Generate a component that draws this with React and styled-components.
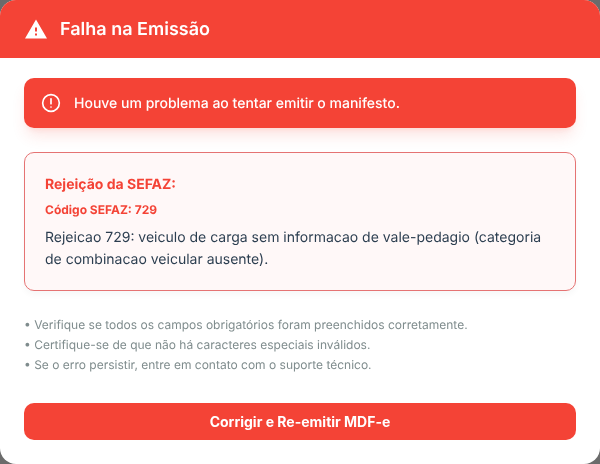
import React from "react";
import styled, { createGlobalStyle } from "styled-components";

const GlobalStyle = createGlobalStyle`
  html, body {
    margin: 0;
    padding: 0;
    background: #6b6b6b;
  }
  * {
    box-sizing: border-box;
  }
`;

const hints = [
  "Verifique se todos os campos obrigatórios foram preenchidos corretamente.",
  "Certifique-se de que não há caracteres especiais inválidos.",
  "Se o erro persistir, entre em contato com o suporte técnico.",
];

const App = () => {
  return (
    <>
      <GlobalStyle />
      <Modal>
        <Header>
          <svg width="24" height="24" viewBox="0 0 24 24" fill="#fff">
            <path d="M1 21.5h22L12 2.5 1 21.5zm12-3h-2v-2h2v2zm0-4h-2v-4h2v4z" />
          </svg>
          <Title>Falha na Emissão</Title>
        </Header>
        <Body>
          <AlertBar>
            <svg
              width="20"
              height="20"
              viewBox="0 0 24 24"
              fill="none"
              stroke="#fff"
              strokeWidth="2"
              strokeLinecap="round"
            >
              <circle cx="12" cy="12" r="10" />
              <path d="M12 7v6" />
              <path d="M12 16.8v.1" />
            </svg>
            <AlertText>Houve um problema ao tentar emitir o manifesto.</AlertText>
          </AlertBar>
          <RejectCard>
            <RejectTitle>Rejeição da SEFAZ:</RejectTitle>
            <RejectCode>Código SEFAZ: 729</RejectCode>
            <RejectText>
              Rejeicao 729: veiculo de carga sem informacao de vale-pedagio (categoria
              de combinacao veicular ausente).
            </RejectText>
          </RejectCard>
          <HintList>
            {hints.map((hint) => (
              <li key={hint}>• {hint}</li>
            ))}
          </HintList>
          <SubmitButton>Corrigir e Re-emitir MDF-e</SubmitButton>
        </Body>
      </Modal>
    </>
  );
};
export default App;

const Modal = styled.div`
  width: 600px;
  height: 464px;
  background: #fff;
  border-radius: 16px;
  overflow: hidden;
  font-family: Inter, "Liberation Sans", sans-serif;
  text-rendering: geometricPrecision;
  will-change: transform;
  display: flex;
  flex-direction: column;
`;

const Header = styled.header`
  height: 58px;
  background: #f44336;
  display: flex;
  align-items: center;
  gap: 12px;
  padding: 0 24px;
  flex-shrink: 0;
`;

const Title = styled.h2`
  margin: 0;
  color: #fff;
  font-size: 18px;
  font-weight: 600;
`;

const Body = styled.div`
  padding: 20px 24px 0;
  display: flex;
  flex-direction: column;
`;

const AlertBar = styled.div`
  height: 50px;
  background: #f44336;
  border-radius: 10px;
  display: flex;
  align-items: center;
  gap: 13px;
  padding: 0 17px;
  box-shadow: 0 10px 15px -3px rgba(244, 67, 54, 0.15), 0 4px 6px -4px rgba(244, 67, 54, 0.15);
`;

const AlertText = styled.span`
  color: #fff;
  font-size: 14px;
  font-weight: 500;
`;

const RejectCard = styled.div`
  margin-top: 24px;
  height: 139px;
  background: #fff8f8;
  border: 1px solid #e57373;
  border-radius: 10px;
  padding: 20px;
  box-shadow: 0 4px 6px rgba(0, 0, 0, 0.03);
`;

const RejectTitle = styled.h3`
  margin: 3px 0 0;
  color: #f44336;
  font-size: 14px;
  font-weight: 700;
  line-height: 17px;
`;

const RejectCode = styled.div`
  margin-top: 9px;
  color: #f44336;
  font-size: 12px;
  font-weight: 700;
  line-height: 16px;
`;

const RejectText = styled.p`
  margin: 9px 0 0;
  color: #2c3e50;
  font-size: 14px;
  line-height: 22.4px;
`;

const HintList = styled.ul`
  list-style: none;
  margin: 24px 0 0;
  padding: 0;
  color: #7f8c8d;
  font-size: 12px;
  line-height: 20px;
`;

const SubmitButton = styled.button`
  margin-top: 28px;
  height: 37px;
  width: 100%;
  border: none;
  border-radius: 10px;
  background: #f44336;
  color: #fff;
  font-family: inherit;
  font-size: 14px;
  font-weight: 700;
`;
